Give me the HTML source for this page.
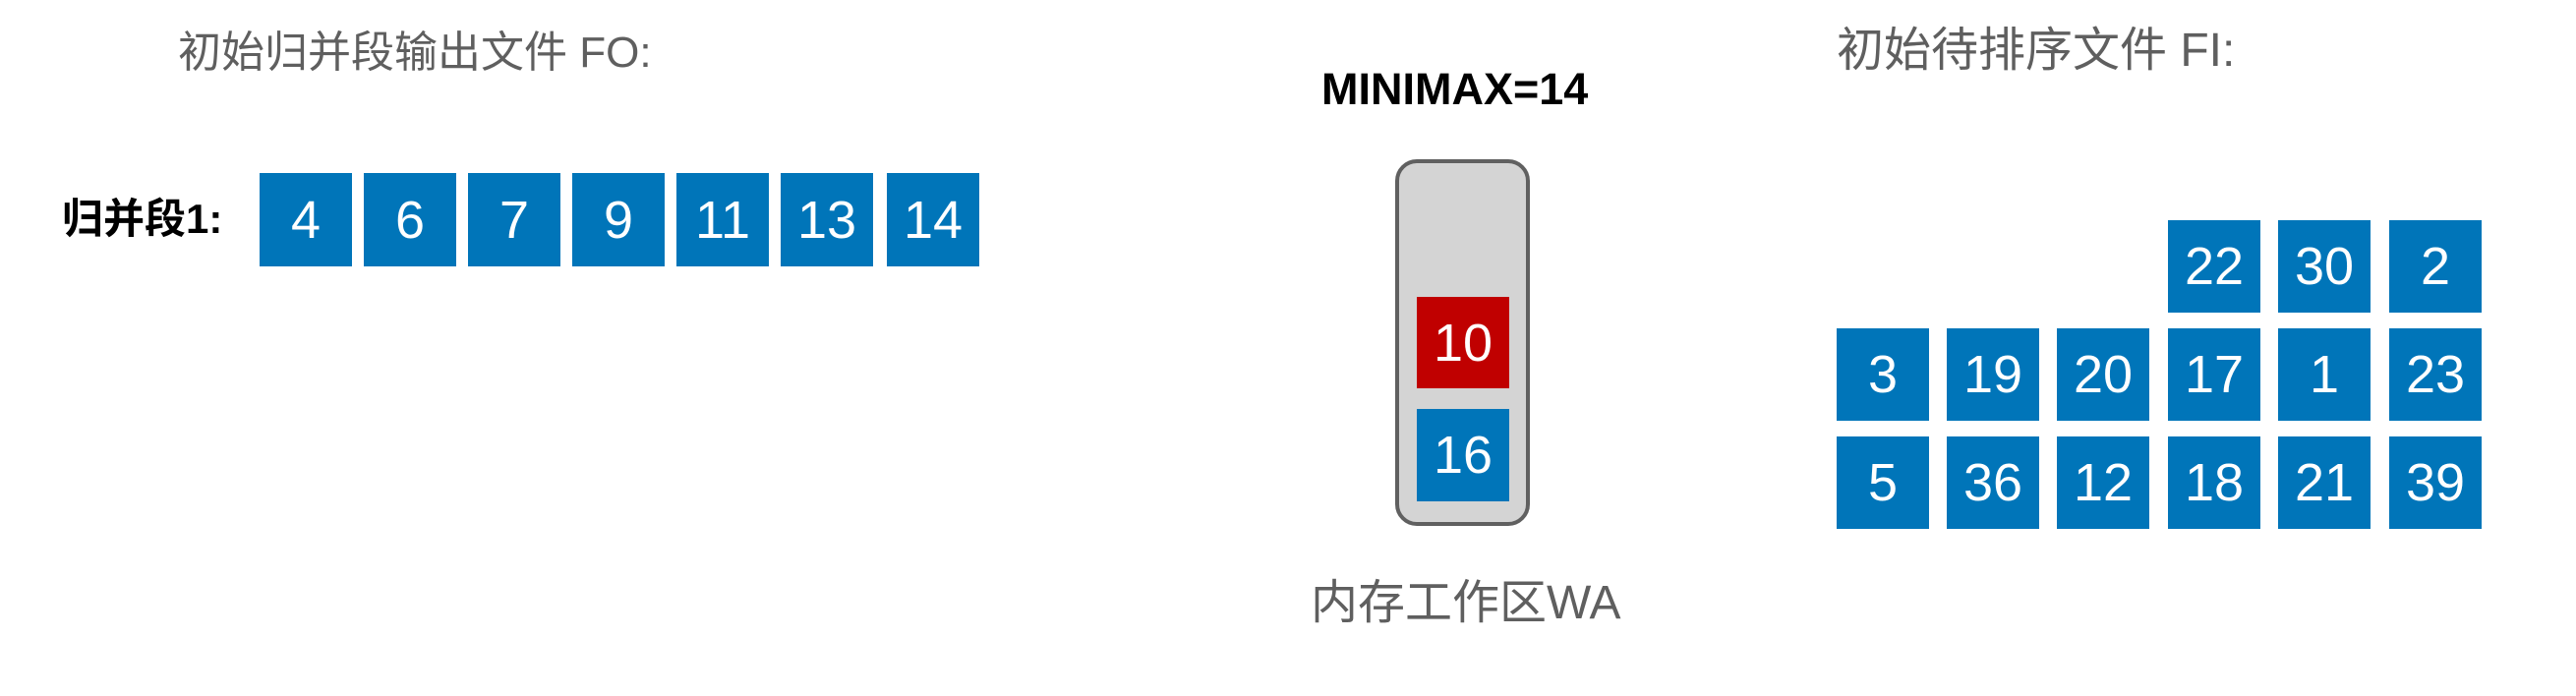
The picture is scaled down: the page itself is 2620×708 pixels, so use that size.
<!DOCTYPE html>
<html><head><meta charset="utf-8"><style>
html,body{margin:0;padding:0;background:#fff;}
body{width:2620px;height:708px;position:relative;overflow:hidden;font-family:"Liberation Sans","Noto Sans CJK SC",sans-serif;}
.t{position:absolute;white-space:nowrap;color:#5f5f5f;font-size:44px;line-height:1;}
.b{position:absolute;width:94px;background:#0075b9;color:#fff;font-size:54px;display:flex;align-items:center;justify-content:center;}
.r1{height:95px;top:176px;}
.g{height:94px;}
</style></head><body>
<div class="t" style="left:181px;top:32px;">初始归并段输出文件 FO:</div>
<div class="t" style="left:63px;top:202px;color:#000;font-weight:bold;font-size:42px;">归并段1:</div>
<div class="b r1" style="left:264px">4</div>
<div class="b r1" style="left:370px">6</div>
<div class="b r1" style="left:476px">7</div>
<div class="b r1" style="left:582px">9</div>
<div class="b r1" style="left:688px">11</div>
<div class="b r1" style="left:794px">13</div>
<div class="b r1" style="left:902px">14</div>

<div class="t" style="left:1344px;top:68px;color:#000;font-weight:bold;font-size:45px;">MINIMAX=14</div>
<div style="position:absolute;left:1419px;top:162px;width:129px;height:365px;border:4px solid #606060;border-radius:22px;background:#d4d4d4;"></div>
<div class="b" style="left:1441px;top:302px;height:93px;background:#c00000;">10</div>
<div class="b" style="left:1441px;top:416px;height:94px;">16</div>
<div class="t" style="left:1333px;top:590px;font-size:48px;">内存工作区WA</div>

<div class="t" style="left:1868px;top:28px;font-size:48px;">初始待排序文件 FI:</div>
<div class="b g" style="left:2205px;top:224px">22</div>
<div class="b g" style="left:2317px;top:224px">30</div>
<div class="b g" style="left:2430px;top:224px">2</div>
<div class="b g" style="left:1868px;top:334px">3</div>
<div class="b g" style="left:1980px;top:334px">19</div>
<div class="b g" style="left:2092px;top:334px">20</div>
<div class="b g" style="left:2205px;top:334px">17</div>
<div class="b g" style="left:2317px;top:334px">1</div>
<div class="b g" style="left:2430px;top:334px">23</div>
<div class="b g" style="left:1868px;top:444px">5</div>
<div class="b g" style="left:1980px;top:444px">36</div>
<div class="b g" style="left:2092px;top:444px">12</div>
<div class="b g" style="left:2205px;top:444px">18</div>
<div class="b g" style="left:2317px;top:444px">21</div>
<div class="b g" style="left:2430px;top:444px">39</div>
</body></html>
